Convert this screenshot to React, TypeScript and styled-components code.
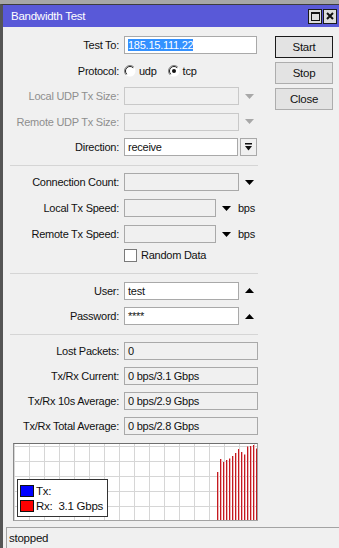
import React from 'react';
import styled, { createGlobalStyle } from 'styled-components';

const GlobalStyle = createGlobalStyle`
  html, body {
    margin: 0;
    padding: 0;
    background: #a7a7a7;
  }
  body {
    font-family: "Liberation Sans", Arial, sans-serif;
    font-size: 11px;
    letter-spacing: -0.25px;
    color: #111;
  }
`;

const Window = styled.div`
  margin-top: 4px;
  border-top: 1px solid #3d3d3d;
  border-left: 3px solid #555;
  background: #f0f0f0;
  display: flex;
  flex-direction: column;
  height: 544px;
  box-sizing: border-box;
  overflow: hidden;
`;

const TitleBar = styled.div`
  height: 22px;
  flex: none;
  background: #5959d8;
  color: #fff;
  display: flex;
  align-items: center;
  padding: 0 2px 0 8px;
  font-size: 11.5px;
`;

const TitleText = styled.span`
  flex: 1;
`;

const TitleButton = styled.div`
  width: 14px;
  height: 15px;
  box-sizing: border-box;
  border: 1px solid #1a1a1a;
  background: #dcdcdc;
  display: flex;
  align-items: center;
  justify-content: center;
  margin-left: 1px;
`;

const Main = styled.div`
  display: flex;
  flex: none;
`;

const Form = styled.div`
  width: 255px;
  box-sizing: border-box;
  padding: 9px 0 0 7px;
  display: flex;
  flex-direction: column;
`;

const Section = styled.div<{ $gap: number }>`
  display: flex;
  flex-direction: column;
  gap: ${p => p.$gap}px;
`;

const Separator = styled.div<{ $top: number; $bottom: number }>`
  height: 1px;
  background: #d5d5d5;
  margin: ${p => p.$top}px 0 ${p => p.$bottom}px;
`;

const Row = styled.div`
  display: flex;
  align-items: center;
  height: 18px;
`;

const Label = styled.div<{ $disabled?: boolean }>`
  width: 114px;
  flex: none;
  box-sizing: border-box;
  padding-right: 5px;
  text-align: right;
  white-space: nowrap;
  color: ${p => (p.$disabled ? '#8e8e8e' : '#111')};
`;

type FieldKind = 'edit' | 'disabled' | 'empty' | 'readonly';

const Field = styled.div<{ $w: number; $kind: FieldKind }>`
  width: ${p => p.$w}px;
  height: 18px;
  flex: none;
  box-sizing: border-box;
  padding: 0 3px;
  line-height: 16px;
  white-space: nowrap;
  overflow: hidden;
  background: ${p => (p.$kind === 'edit' ? '#fff' : '#f0f0f0')};
  border: 1px solid ${p => (p.$kind === 'disabled' ? '#c9c9c9' : '#a9a9a9')};
`;

const Selected = styled.span`
  background: #3391ff;
  color: #fff;
`;

const Arrow = styled.svg<{ $gap?: number }>`
  margin-left: ${p => p.$gap ?? 6}px;
  flex: none;
`;

const DropButton = styled.div`
  width: 17px;
  height: 18px;
  box-sizing: border-box;
  margin-left: 2px;
  border: 1px solid #a9a9a9;
  background: #f0f0f0;
  display: flex;
  align-items: center;
  justify-content: center;
`;

const Unit = styled.span`
  margin-left: 7px;
`;

const RadioOption = styled.label`
  display: flex;
  align-items: center;
  gap: 3px;
  margin-right: 11px;
`;

const CheckRow = styled(Row)`
  padding-left: 114px;
  margin-top: 3px;
`;

const CheckBox = styled.div`
  width: 13px;
  height: 13px;
  box-sizing: border-box;
  border: 1px solid #7a7a7a;
  background: #fff;
  margin-right: 4px;
`;

const Chart = styled.div`
  position: relative;
  margin: 8px 0 0 3px;
  width: 245px;
  height: 78px;
  box-sizing: border-box;
  border: 1px solid #a3a3a3;
  border-top-color: #6f6f6f;
  border-left-color: #8a8a8a;
  background: #fff;
`;

const Legend = styled.div`
  position: absolute;
  left: 3px;
  top: 35px;
  width: 91px;
  height: 38px;
  box-sizing: border-box;
  border: 1px solid #333;
  background: #fff;
  display: flex;
  flex-direction: column;
  justify-content: center;
  gap: 3px;
  padding-left: 2px;
  font-size: 11.5px;
`;

const LegendItem = styled.div`
  display: flex;
  align-items: center;
  height: 12px;
  white-space: pre;
`;

const Swatch = styled.div<{ $color: string }>`
  width: 14px;
  height: 12px;
  flex: none;
  box-sizing: border-box;
  border: 1px solid #111;
  background: ${p => p.$color};
  margin-right: 2px;
`;

const Buttons = styled.div`
  margin-left: 17px;
  padding-top: 9px;
  display: flex;
  flex-direction: column;
  gap: 4px;
`;

const Button = styled.div<{ $default?: boolean }>`
  width: 58px;
  height: 22px;
  box-sizing: border-box;
  border: 1px solid ${p => (p.$default ? '#1a1a1a' : '#adadad')};
  background: #e3e3e3;
  display: flex;
  align-items: center;
  justify-content: center;
  font-size: 11.5px;
`;

const StatusBar = styled.div`
  margin: 6px 0 0 3px;
  height: 21px;
  box-sizing: border-box;
  border-top: 1px solid #a3a3a3;
  border-left: 1px solid #a3a3a3;
  padding-left: 2px;
  display: flex;
  align-items: center;
  font-size: 11.5px;
`;

const DownArrow = ({ color = '#000', gap }: { color?: string; gap?: number }) => (
  <Arrow $gap={gap} width="9" height="5" viewBox="0 0 9 5">
    <path d="M0 0 H9 L4.5 5 Z" fill={color} />
  </Arrow>
);

const UpArrow = () => (
  <Arrow width="9" height="5" viewBox="0 0 9 5">
    <path d="M0 5 H9 L4.5 0 Z" fill="#000" />
  </Arrow>
);

const Radio = ({ checked }: { checked?: boolean }) => (
  <svg width="12" height="12" viewBox="0 0 12 12">
    <circle cx="6" cy="6" r="5.5" fill="#fff" />
    <path d="M2.1 9.9 A5.5 5.5 0 0 1 9.9 2.1" stroke="#808080" fill="none" />
    <path d="M2.8 9.2 A4.5 4.5 0 0 1 9.2 2.8" stroke="#222" fill="none" />
    {checked && <circle cx="6" cy="6" r="2" fill="#111" />}
  </svg>
);

const bars = [28, 15, 18, 16, 14.5, 12, 9, 5, 8, 10.5, 2.5, 2, 1, 4.5];

const Plot = () => {
  const vlines = Array.from({ length: 17 }, (_, i) => i * 15);
  const hlines = [2, 17, 32, 47, 62];
  return (
    <svg width="243" height="76" viewBox="0 0 243 76" style={{ display: 'block' }}>
      {vlines.map(x => (
        <line key={'v' + x} x1={x + 0.5} y1="0" x2={x + 0.5} y2="76" stroke="#d6d6d6" />
      ))}
      {hlines.map(y => (
        <line key={'h' + y} x1="0" y1={y + 0.5} x2="243" y2={y + 0.5} stroke="#d6d6d6" />
      ))}
      {bars.map((top, i) => (
        <g key={i}>
          <rect x={203 + i * 3} y={top} width="1" height={76 - top} fill="#c41a20" />
          <rect x={204 + i * 3} y={top} width="1" height={76 - top} fill="#eeb4b6" />
        </g>
      ))}
    </svg>
  );
};

export default function App() {
  return (
    <>
      <GlobalStyle />
      <Window>
        <TitleBar>
          <TitleText>Bandwidth Test</TitleText>
          <TitleButton>
            <svg width="9" height="9" viewBox="0 0 9 9">
              <rect x="0.5" y="0.5" width="8" height="8" fill="none" stroke="#111" />
              <rect x="0" y="0" width="9" height="2" fill="#111" />
            </svg>
          </TitleButton>
          <TitleButton>
            <svg width="8" height="8" viewBox="0 0 8 8">
              <path d="M1 1 L7 7 M7 1 L1 7" stroke="#111" strokeWidth="2" />
            </svg>
          </TitleButton>
        </TitleBar>
        <Main>
          <Form>
            <Section $gap={7.5}>
              <Row>
                <Label>Test To:</Label>
                <Field $w={133} $kind="edit">
                  <Selected>185.15.111.22</Selected>
                </Field>
              </Row>
              <Row>
                <Label>Protocol:</Label>
                <RadioOption>
                  <Radio />
                  udp
                </RadioOption>
                <RadioOption>
                  <Radio checked />
                  tcp
                </RadioOption>
              </Row>
              <Row>
                <Label $disabled>Local UDP Tx Size:</Label>
                <Field $w={115} $kind="disabled" />
                <DownArrow color="#a8a8a8" />
              </Row>
              <Row>
                <Label $disabled>Remote UDP Tx Size:</Label>
                <Field $w={115} $kind="disabled" />
                <DownArrow color="#a8a8a8" />
              </Row>
              <Row>
                <Label>Direction:</Label>
                <Field $w={114} $kind="edit">receive</Field>
                <DropButton>
                  <svg width="9" height="8" viewBox="0 0 9 8">
                    <rect x="1" y="0" width="7" height="1.5" fill="#111" />
                    <path d="M1 3 H8 L4.5 7.5 Z" fill="#111" />
                  </svg>
                </DropButton>
              </Row>
            </Section>
            <Separator $top={9} $bottom={7} />
            <Section $gap={8}>
              <Row>
                <Label>Connection Count:</Label>
                <Field $w={115} $kind="empty" />
                <DownArrow />
              </Row>
              <Row>
                <Label>Local Tx Speed:</Label>
                <Field $w={92} $kind="empty" />
                <DownArrow />
                <Unit>bps</Unit>
              </Row>
              <Row>
                <Label>Remote Tx Speed:</Label>
                <Field $w={92} $kind="empty" />
                <DownArrow />
                <Unit>bps</Unit>
              </Row>
            </Section>
            <CheckRow>
              <CheckBox />
              Random Data
            </CheckRow>
            <Separator $top={8.5} $bottom={8} />
            <Section $gap={7.5}>
              <Row>
                <Label>User:</Label>
                <Field $w={115} $kind="edit">test</Field>
                <UpArrow />
              </Row>
              <Row>
                <Label>Password:</Label>
                <Field $w={115} $kind="edit">****</Field>
                <UpArrow />
              </Row>
            </Section>
            <Separator $top={9} $bottom={7} />
            <Section $gap={7}>
              <Row>
                <Label>Lost Packets:</Label>
                <Field $w={134} $kind="readonly">0</Field>
              </Row>
              <Row>
                <Label>Tx/Rx Current:</Label>
                <Field $w={134} $kind="readonly">0 bps/3.1 Gbps</Field>
              </Row>
              <Row>
                <Label>Tx/Rx 10s Average:</Label>
                <Field $w={134} $kind="readonly">0 bps/2.9 Gbps</Field>
              </Row>
              <Row>
                <Label>Tx/Rx Total Average:</Label>
                <Field $w={134} $kind="readonly">0 bps/2.8 Gbps</Field>
              </Row>
            </Section>
            <Chart>
              <Plot />
              <Legend>
                <LegendItem>
                  <Swatch $color="#0000ff" />
                  Tx:
                </LegendItem>
                <LegendItem>
                  <Swatch $color="#ff0000" />
                  Rx:  3.1 Gbps
                </LegendItem>
              </Legend>
            </Chart>
          </Form>
          <Buttons>
            <Button $default>Start</Button>
            <Button>Stop</Button>
            <Button>Close</Button>
          </Buttons>
        </Main>
        <StatusBar>stopped</StatusBar>
      </Window>
    </>
  );
}
